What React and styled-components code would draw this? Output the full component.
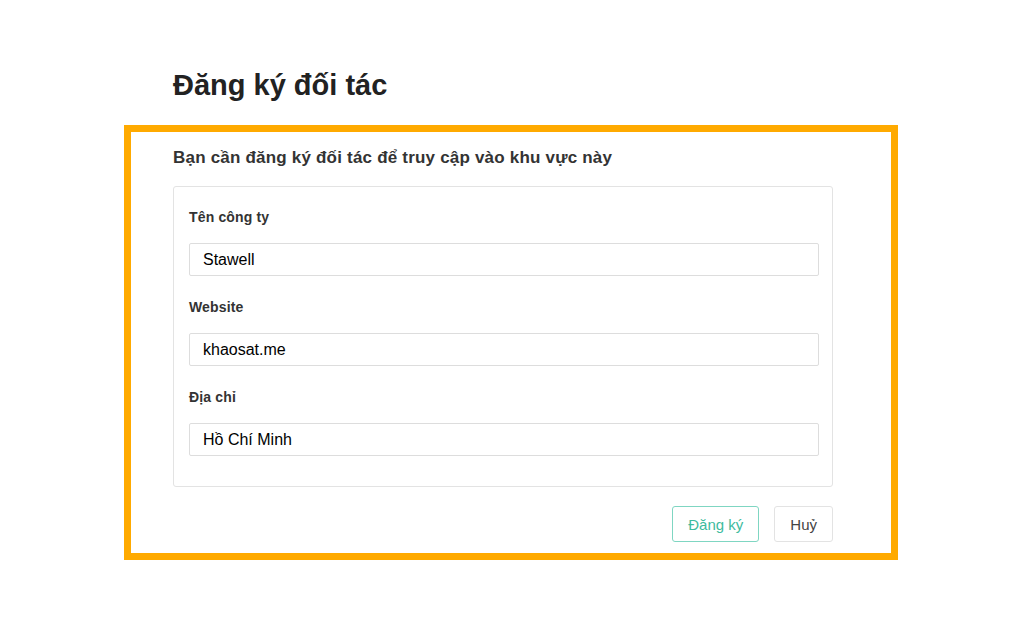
import styled, { createGlobalStyle } from "styled-components";

const GlobalStyle = createGlobalStyle`
body{
    margin: 0;
    background: #FFFFFF;
    font-family: "Liberation Sans", Arial, sans-serif;
    color: #333333;
}
`

const fields = [
    { label: "Tên công ty", value: "Stawell" },
    { label: "Website", value: "khaosat.me" },
    { label: "Địa chỉ", value: "Hồ Chí Minh" },
]

export default function App() {
    return (
        <Page>
            <GlobalStyle/>
            <Title>Đăng ký đối tác</Title>
            <Card>
                <Notice>Bạn cần đăng ký đối tác để truy cập vào khu vực này</Notice>
                <FormBox>
                    {fields.map(f => (
                        <Field key={f.label}>
                            <label>{f.label}</label>
                            <input type="text" defaultValue={f.value}/>
                        </Field>
                    ))}
                </FormBox>
                <Actions>
                    <Button primary>Đăng ký</Button>
                    <Button>Huỷ</Button>
                </Actions>
            </Card>
        </Page>
    )
}

const Page = styled.div`
padding: 66px 0 0 124px;
width: 774px;
`

const Title = styled.h1`
margin: 0 0 21px 49px;
font-size: 29px;
line-height: 38px;
font-weight: 700;
color: #222222;
`

const Card = styled.div`
border: 7px solid #FFAA00;
padding: 15px 58px 11px 42px;
`

const Notice = styled.h2`
margin: 0 0 18px 0;
font-size: 17px;
line-height: 21px;
letter-spacing: 0.2px;
font-weight: 700;
color: #333333;
`

const FormBox = styled.div`
border: 1px solid #E3E3E3;
border-radius: 3px;
padding: 22px 13px 30px 15px;
display: flex;
flex-direction: column;
gap: 23px;
`

const Field = styled.div`
display: flex;
flex-direction: column;
label{
    font-size: 14px;
    line-height: 17px;
    letter-spacing: 0.15px;
    font-weight: 700;
    color: #333333;
    margin-bottom: 17px;
}
input{
    height: 33px;
    box-sizing: border-box;
    border: 1px solid #DDDDDD;
    border-radius: 2px;
    padding: 0 13px;
    font-family: "Liberation Sans", Arial, sans-serif;
    font-size: 16px;
    color: #000000;
    outline: none;
}
`

const Actions = styled.div`
display: flex;
justify-content: flex-end;
gap: 15px;
margin-top: 19px;
`

const Button = styled.button`
height: 36px;
padding: 0 15px;
background: #FFFFFF;
border: 1px solid ${p => p.primary ? "#7FD6C2" : "#E3E3E3"};
border-radius: 3px;
color: ${p => p.primary ? "#3DBB9E" : "#444444"};
font-family: "Liberation Sans", Arial, sans-serif;
font-size: 15px;
`
